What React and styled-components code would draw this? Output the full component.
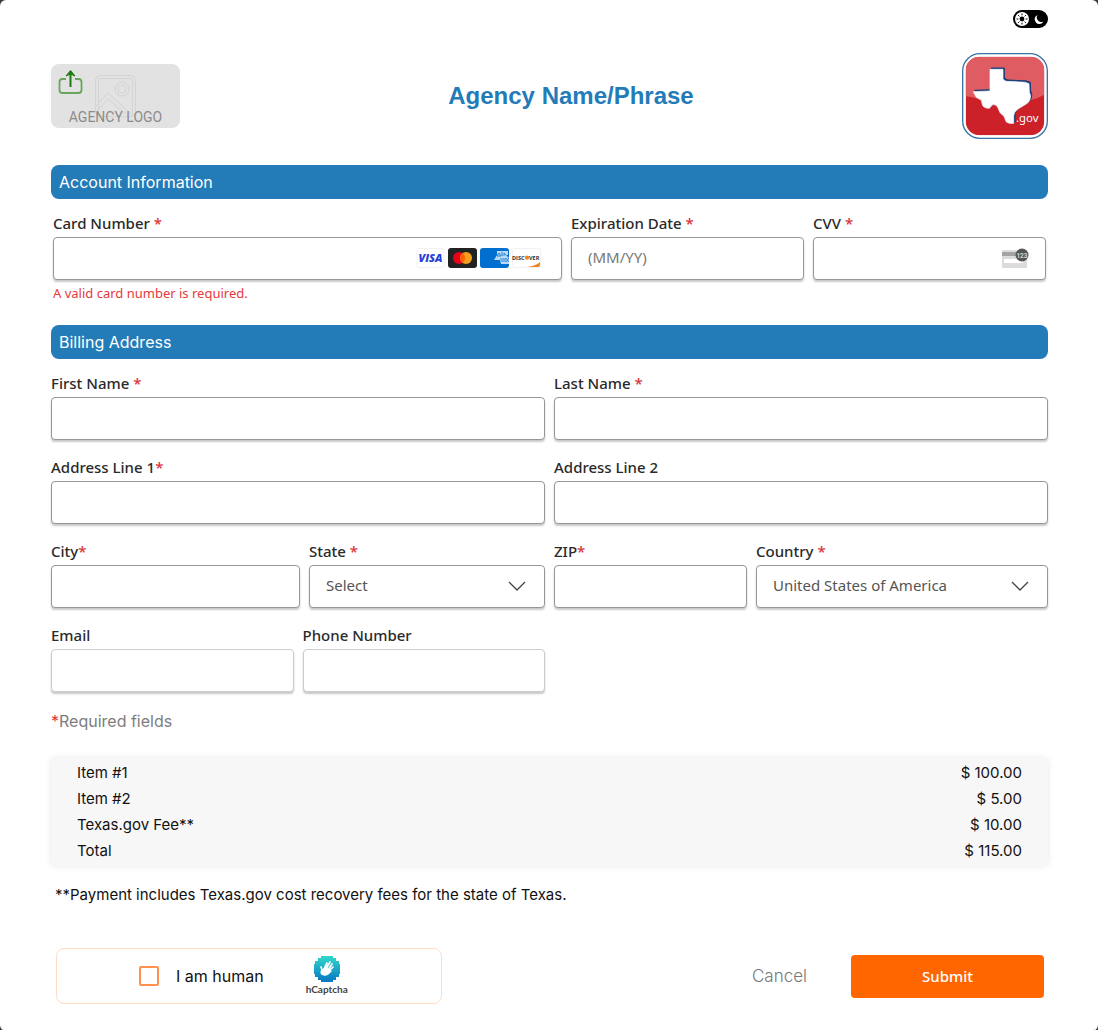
import React, { useState } from "react";
import styled, { createGlobalStyle } from "styled-components";

const sans = `"Liberation Sans", Arial, sans-serif`;
const noto = `"Noto Sans", "Open Sans", sans-serif`;
const inter = `Inter, "Liberation Sans", sans-serif`;

const GlobalStyle = createGlobalStyle`
  *, *::before, *::after { box-sizing: border-box; }
  body { margin: 0; background: #3a3a3a; font-family: ${noto}; color: #222; }
  button, input, select { font: inherit; color: inherit; margin: 0; }
`;

const Page = styled.main`
  min-height: 100vh;
  padding: 10px 50px 26px 51px;
  background: #fff;
  border-bottom: 1px solid #dcdcdc;
  border-radius: 6px;
`;

const TopBar = styled.div`
  display: flex;
  justify-content: flex-end;
`;

const ThemeToggle = styled.button`
  display: block;
  width: 35px;
  height: 18px;
  padding: 0;
  border: 0;
  border-radius: 9px;
  background: #000;
  cursor: pointer;
  svg { display: block; }
`;

const Header = styled.header`
  display: flex;
  justify-content: space-between;
  align-items: center;
  margin: 25px 0 26px;
`;

const AgencyLogo = styled.button`
  position: relative;
  width: 129px;
  height: 64px;
  padding: 0;
  border: 0;
  border-radius: 8px;
  background: #e2e2e2;
  cursor: pointer;
  svg { position: absolute; inset: 0; }
`;

const AgencyLogoText = styled.span`
  position: absolute;
  left: 0;
  right: 0;
  bottom: 2px;
  font: 14px/18px Roboto, sans-serif;
  color: #8b8b8b;
`;

const Title = styled.h1`
  margin: 0;
  font: 700 24px/32px ${sans};
  color: #237bb8;
`;

const StateLogo = styled.svg`
  display: block;
  width: 86px;
  height: 86px;
`;

const SectionTitle = styled.h2`
  margin: 0;
  padding: 0 8px;
  border-radius: 8px;
  background: #237bb8;
  color: #fff;
  font: 400 16px/34px ${inter};
`;

const CardRow = styled.div`
  display: grid;
  grid-template-columns: 509fr 233fr 233fr;
  align-items: start;
  gap: 9px;
  padding: 13px 2px 22px;
`;

const AddressGrid = styled.div`
  display: grid;
  grid-template-columns: 1fr 1fr;
  gap: 16px 9px;
  padding-top: 13px;
`;

const SubRow = styled.div`
  display: grid;
  grid-template-columns: ${(p) => p.$columns};
  gap: 9px;
`;

const FieldBox = styled.div`
  display: flex;
  flex-direction: column;
  min-width: 0;
`;

const Label = styled.label`
  margin-bottom: 3px;
  font-size: 15px;
  font-weight: 500;
  line-height: 22px;
  color: #2a2a2a;
`;

const Star = styled.span`
  color: #d9363a;
`;

const Control = styled.div`
  position: relative;
`;

const controlLook = (p) => `
  display: block;
  width: 100%;
  height: 43px;
  padding: 0 16px 4px;
  border: 1px solid ${p.$soft ? "#cdcdcd" : "#979797"};
  border-radius: 4px;
  background: #fff;
  box-shadow: 0 2px 2px rgba(0, 0, 0, 0.22);
  font-size: 15px;
  color: #555;
`;

const Input = styled.input`
  ${controlLook}
  &::placeholder { color: #777; opacity: 1; }
`;

const Select = styled.select`
  ${controlLook}
  appearance: none;
  padding-right: 44px;
`;

const Adornment = styled.span`
  position: absolute;
  top: 0;
  bottom: 2px;
  right: ${(p) => p.$right}px;
  display: flex;
  align-items: center;
  gap: 3px;
  pointer-events: none;
`;

const ErrorText = styled.p`
  margin: 3px 0 0;
  font-size: 13px;
  line-height: 20px;
  color: #e5393c;
`;

const RequiredNote = styled.p`
  margin: 18px 0 26px;
  font: 16px/22px ${inter};
  color: #7d7d7d;
`;

const Summary = styled.table`
  width: 100%;
  border-spacing: 0;
  padding: 2px 26px;
  border-radius: 4px;
  background: #f7f7f7;
  box-shadow: 0 0 6px rgba(0, 0, 0, 0.1);
  font: 15px/26px ${inter};
  color: #111;
  th, td { padding: 0; font-weight: 400; text-align: left; }
  td { text-align: right; }
`;

const FeeNote = styled.p`
  margin: 18px 4px 42px;
  font: 15px/22px ${inter};
  color: #111;
`;

const Footer = styled.footer`
  display: flex;
  align-items: center;
  padding: 0 4px 0 5px;
`;

const Captcha = styled.div`
  display: flex;
  align-items: center;
  flex: 0 1 386px;
  height: 56px;
  padding-left: 82px;
  border: 1px solid #ffdcc4;
  border-radius: 8px;
`;

const CaptchaLabel = styled.label`
  display: flex;
  align-items: center;
  gap: 17px;
  font: 16px/22px ${inter};
  color: #111;
`;

const CaptchaBox = styled.input`
  appearance: none;
  width: 20px;
  height: 20px;
  border: 2px solid #ff914d;
  border-radius: 2px;
  background: #fff;
  &:checked { background: #ff914d; }
`;

const CaptchaBrand = styled.div`
  display: flex;
  flex-direction: column;
  align-items: center;
  margin-left: 42px;
  font: 700 10px/14px Lato, sans-serif;
  color: #444;
`;

const CancelButton = styled.button`
  margin-left: auto;
  padding: 0;
  border: 0;
  background: none;
  font: 300 17px/24px ${inter};
  color: #777;
  cursor: pointer;
`;

const SubmitButton = styled.button`
  flex: 0 1 193px;
  height: 43px;
  margin-left: 44px;
  border: 0;
  border-radius: 4px;
  background: #ff6600;
  color: #fff;
  font: 500 15px/22px ${noto};
  cursor: pointer;
`;

function Field({ id, label, star, children, error }) {
  return (
    <FieldBox>
      <Label htmlFor={id}>
        {label}
        {star && <Star>{star}</Star>}
      </Label>
      <Control>{children}</Control>
      {error && <ErrorText id={`${id}-error`}>{error}</ErrorText>}
    </FieldBox>
  );
}

function TextField({ id, label, star, soft }) {
  return (
    <Field id={id} label={label} star={star}>
      <Input id={id} type="text" $soft={soft} />
    </Field>
  );
}

function Chevron() {
  return (
    <svg width="18" height="10" viewBox="0 0 18 10" fill="none" stroke="#444" strokeWidth="1.3">
      <path d="M1 1l8 8 8-8" />
    </svg>
  );
}

function CardBrands() {
  return (
    <>
      <svg width="29" height="20" viewBox="0 0 29 20">
        <rect x="1" y="0.5" width="27" height="19" rx="2" fill="#fff" stroke="#f1f1f1" />
        <text x="14.5" y="14" textAnchor="middle" fontFamily="Open Sans, sans-serif" fontWeight="800" fontStyle="italic" fontSize="11" fill="#2b3fd6">VISA</text>
      </svg>
      <svg width="29" height="20" viewBox="0 0 29 20">
        <rect width="29" height="20" rx="3" fill="#222" />
        <circle cx="11" cy="10" r="6" fill="#eb001b" />
        <circle cx="18" cy="10" r="6" fill="#f79e1b" />
        <path d="M14.5 5.1a6 6 0 0 1 0 9.8 6 6 0 0 1 0-9.8z" fill="#ff5f00" />
      </svg>
      <svg width="29" height="20" viewBox="0 0 29 20">
        <rect width="29" height="20" rx="3" fill="#016fd0" />
        <path d="M17 3h11v4h-2l3 3v6h-8l-1-4h-6l3-5z" fill="#b9d9f4" />
        <path d="M17 8l2-3 2 3M22 4v4M24 8V5l2 2M17 8h4M20 11h6M21 13h5M26 10l3 4M29 10l-3 4" fill="none" stroke="#016fd0" strokeWidth="0.8" />
      </svg>
      <svg width="29" height="20" viewBox="0 0 29 20">
        <rect x="0.5" y="0.5" width="28" height="19" rx="2" fill="#fff" stroke="#f1f1f1" />
        <path d="M28 14v3q0 2-2 2H15q9-1 13-5z" fill="#f58220" />
        <text x="0" y="11.5" fontFamily="Open Sans, sans-serif" fontWeight="700" fontSize="5.5" fill="#333">DISC</text>
        <circle cx="15" cy="9.6" r="2.2" fill="#f58220" />
        <text x="17" y="11.5" fontFamily="Open Sans, sans-serif" fontWeight="700" fontSize="5.5" fill="#333">VER</text>
      </svg>
    </>
  );
}

function CvvIcon() {
  return (
    <svg width="28" height="22" viewBox="0 0 28 22">
      <rect x="1" y="3" width="25" height="18" rx="1" fill="#dcdcdc" />
      <rect x="1" y="5" width="25" height="4" fill="#a3a3a3" />
      <rect x="3" y="12" width="19" height="4" fill="#fff" />
      <circle cx="21" cy="8" r="6.5" fill="#555" />
      <text x="21" y="10.5" textAnchor="middle" fontFamily="Roboto, sans-serif" fontWeight="700" fontSize="6.5" fill="#d5d5d5">123</text>
    </svg>
  );
}

const texas =
  "M180 208H219V236Q222 243 230 244L272 246Q286 245 297 251L298 277Q304 286 300 298Q298 306 290 311L264 327Q252 335 251 347L251 370Q239 372 229 366L222 349L210 338L203 321Q192 308 184 318L178 325Q164 325 158 317L154 301L139 292L130 275L180 273Z";

function TexasLogo() {
  return (
    <StateLogo viewBox="96 159 258 258" role="img" aria-label="Texas.gov">
      <defs>
        <clipPath id="badge"><rect x="107" y="170" width="236" height="236" rx="42" /></clipPath>
      </defs>
      <rect x="98" y="161" width="254" height="254" rx="52" fill="#fff" stroke="#3b71a3" strokeWidth="4" />
      <g clipPath="url(#badge)">
        <rect x="107" y="170" width="236" height="236" fill="#cd2129" />
        <path d="M107 170H343V284Q305 306 240 306Q170 303 107 288Z" fill="#de5c62" />
      </g>
      <path d={texas} fill="#173f7a" stroke="#173f7a" strokeWidth="3" transform="translate(4 -4)" />
      <path d={texas} fill="#fff" stroke="#fff" strokeWidth="2" />
      <text x="258" y="366" fontFamily="Noto Sans, sans-serif" fontSize="34" fill="#fff">.gov</text>
    </StateLogo>
  );
}

function HandLogo() {
  return (
    <svg width="26" height="26" viewBox="0 0 26 26">
      <defs>
        <linearGradient id="hand" x1="0" y1="0" x2="0" y2="1">
          <stop offset="0" stopColor="#30d9cb" />
          <stop offset="1" stopColor="#0875c4" />
        </linearGradient>
      </defs>
      <path d="M7 0h12v2h3v3h3v3h1v10h-1v3h-3v3h-3v2H7v-2H4v-3H1v-3H0V8h1V5h3V2h3z" fill="url(#hand)" />
      <path d="M10 13l3-6M12 13l4-7M14 14l4-6M15 15l4-4M8.500 15L7 11" stroke="#fff" strokeWidth="1.700" strokeLinecap="round" fill="none" />
      <path d="M7.500 13q-2.500 4 .5 6 4 2 7-1l3-3-6-4-3 2z" fill="#fff" />
    </svg>
  );
}

const items = [
  ["Item #1", "$ 100.00"],
  ["Item #2", "$ 5.00"],
  ["Texas.gov Fee**", "$ 10.00"],
  ["Total", "$ 115.00"],
];

export default function App() {
  const [dark, setDark] = useState(false);
  return (
    <>
      <GlobalStyle />
      <Page>
        <TopBar>
          <ThemeToggle type="button" aria-label="Dark mode" aria-pressed={dark} onClick={() => setDark(!dark)}>
            <svg width="35" height="18" viewBox="0 0 35 18">
              <circle cx="9" cy="9" r="7" fill="#fff" />
              <circle cx="9" cy="9" r="2.400" fill="#000" />
              <path d="M9 3.500v11M3.500 9h11M5.100 5.100l7.800 7.800M12.900 5.100l-7.800 7.800" stroke="#000" strokeWidth="1" strokeDasharray="1.800 7.400" />
              <path d="M24.500 5a4.700 4.700 0 1 0 6 6.500 4.600 4.600 0 0 1-6-6.500z" fill="#fff" />
            </svg>
          </ThemeToggle>
        </TopBar>

        <Header>
          <AgencyLogo type="button">
            <svg width="129" height="64" viewBox="0 0 129 64" fill="none">
              <g stroke="#d3d3d3" strokeWidth="1">
                <rect x="44.500" y="11.500" width="40" height="41" rx="5" />
                <rect x="47.500" y="14.500" width="34" height="38" rx="2" />
                <circle cx="71" cy="25" r="7" />
                <circle cx="71" cy="25" r="4" />
                <path d="M45 42l12-13 23 21M47 46l10-11 18 15" />
              </g>
              <path d="M15 15h-3.500q-3 0-3 3v8q0 3 3 3h16q3 0 3-3v-8q0-3-3-3H24" stroke="#6aa55c" strokeWidth="1.800" />
              <path d="M19.500 23V9" stroke="#1e7a12" strokeWidth="2" />
              <path d="M15 12l4.500-5.500L24 12l-4.500-2z" fill="#1e7a12" stroke="#1e7a12" />
            </svg>
            <AgencyLogoText>AGENCY LOGO</AgencyLogoText>
          </AgencyLogo>
          <Title>Agency Name/Phrase</Title>
          <TexasLogo />
        </Header>

        <form onSubmit={(e) => e.preventDefault()}>
          <SectionTitle>Account Information</SectionTitle>
          <CardRow>
            <Field id="card" label="Card Number " star="*" error="A valid card number is required.">
              <Input id="card" type="text" inputMode="numeric" aria-describedby="card-error" />
              <Adornment $right={21}><CardBrands /></Adornment>
            </Field>
            <Field id="expiry" label="Expiration Date " star="*">
              <Input id="expiry" type="text" placeholder="(MM/YY)" />
            </Field>
            <Field id="cvv" label="CVV " star="*">
              <Input id="cvv" type="text" inputMode="numeric" />
              <Adornment $right={17}><CvvIcon /></Adornment>
            </Field>
          </CardRow>

          <SectionTitle>Billing Address</SectionTitle>
          <AddressGrid>
            <TextField id="first" label="First Name " star="*" />
            <TextField id="last" label="Last Name " star="*" />
            <TextField id="line1" label="Address Line 1" star="*" />
            <TextField id="line2" label="Address Line 2" />
            <SubRow $columns="249fr 236fr">
              <TextField id="city" label="City" star="*" />
              <Field id="state" label="State " star="*">
                <Select id="state">
                  <option>Select</option>
                  <option>Texas</option>
                </Select>
                <Adornment $right={19}><Chevron /></Adornment>
              </Field>
            </SubRow>
            <SubRow $columns="193fr 292fr">
              <TextField id="zip" label="ZIP" star="*" />
              <Field id="country" label="Country " star="*">
                <Select id="country">
                  <option>United States of America</option>
                </Select>
                <Adornment $right={19}><Chevron /></Adornment>
              </Field>
            </SubRow>
            <SubRow $columns="1fr 1fr">
              <TextField id="email" label="Email" soft />
              <TextField id="phone" label="Phone Number" soft />
            </SubRow>
          </AddressGrid>

          <RequiredNote><Star>*</Star>Required fields</RequiredNote>

          <Summary>
            <tbody>
              {items.map(([name, price]) => (
                <tr key={name}>
                  <th scope="row">{name}</th>
                  <td>{price}</td>
                </tr>
              ))}
            </tbody>
          </Summary>

          <FeeNote>**Payment includes Texas.gov cost recovery fees for the state of Texas.</FeeNote>

          <Footer>
            <Captcha>
              <CaptchaLabel htmlFor="human">
                <CaptchaBox id="human" type="checkbox" />
                I am human
              </CaptchaLabel>
              <CaptchaBrand>
                <HandLogo />
                hCaptcha
              </CaptchaBrand>
            </Captcha>
            <CancelButton type="button">Cancel</CancelButton>
            <SubmitButton type="submit">Submit</SubmitButton>
          </Footer>
        </form>
      </Page>
    </>
  );
}
